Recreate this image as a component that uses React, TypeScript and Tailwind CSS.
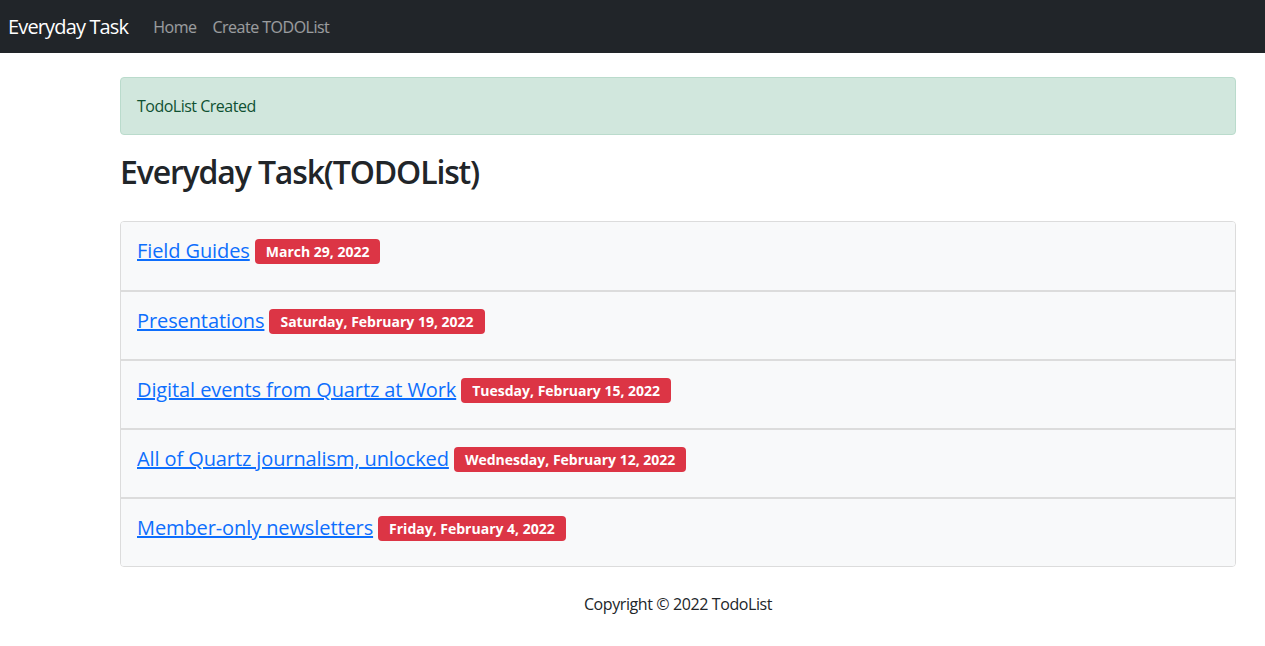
import React from 'react';

const TASKS = [
  { title: 'Field Guides', date: 'March 29, 2022' },
  { title: 'Presentations', date: 'Saturday, February 19, 2022' },
  { title: 'Digital events from Quartz at Work', date: 'Tuesday, February 15, 2022' },
  { title: 'All of Quartz journalism, unlocked', date: 'Wednesday, February 12, 2022' },
  { title: 'Member-only newsletters', date: 'Friday, February 4, 2022' },
];

export default function App() {
  return (
    <div className="min-h-screen bg-white text-[#212529] font-['Open_Sans',sans-serif]">
      {/* Navbar */}
      <nav className="h-[53px] bg-[#212529] flex items-center px-2">
        <a href="#" className="text-white text-[20px] tracking-[-0.85px] mr-[25px]">
          Everyday Task
        </a>
        <div className="flex items-center gap-[16px] text-[16px] text-white/55 tracking-[-0.5px]">
          <a href="#">Home</a>
          <a href="#">Create TODOList</a>
        </div>
      </nav>

      <main className="ml-[120px] w-[1116px]">
        {/* Alert */}
        <div className="mt-[24px] h-[58px] flex items-center px-[16px] bg-[#d1e7dd] border border-[#badbcc] rounded-[4px] text-[#0f5132] text-[16px] tracking-[-0.5px]">
          TodoList Created
        </div>

        <h2 className="mt-[18px] text-[32px] font-semibold leading-[38px] tracking-[-1.15px]">
          Everyday Task(TODOList)
        </h2>

        {/* Task list */}
        <ul className="mt-[30px] border border-[#dcdcdc] rounded-[4px] overflow-hidden">
          {TASKS.map((task, i) => (
            <li
              key={task.title}
              className={`bg-[#f8f9fa] px-[16px] pt-[15px] ${i > 0 ? 'h-[69px] border-t-2 border-[#dcdcdc]' : 'h-[68px]'}`}
            >
              <div className="flex items-center h-[28px]">
                <a href="#" className="text-[#0d6efd] underline text-[20px] tracking-[-0.1px]">
                  {task.title}
                </a>
                <span className="ml-[5px] inline-flex items-center h-[25px] px-[11px] rounded-[4px] bg-[#dc3545] text-white text-[14px] font-bold">
                  {task.date}
                </span>
              </div>
            </li>
          ))}
        </ul>

        <footer className="mt-[25px] text-center text-[16px] tracking-[-0.4px]">
          Copyright © 2022 TodoList
        </footer>
      </main>
    </div>
  );
}
